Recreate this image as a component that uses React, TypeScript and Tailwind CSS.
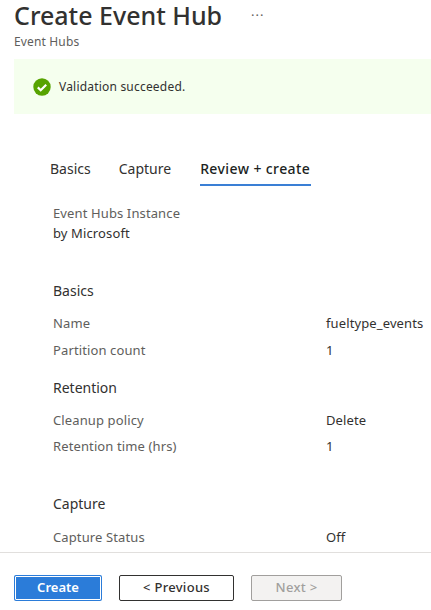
const font = "font-['Noto_Sans','Open_Sans',sans-serif]"

function Row({ label, value, className = '' }: { label: string; value: string; className?: string }) {
  return (
    <div className={`flex h-5 items-center text-[13px] leading-5 tracking-[0.12px] ${className}`}>
      <span className="w-[273px] text-[#605e5c]">{label}</span>
      <span className="text-[#323130]">{value}</span>
    </div>
  )
}

function Heading({ children, className = '' }: { children: string; className?: string }) {
  return <div className={`h-5 text-[14px] leading-5 text-[#323130] ${className}`}>{children}</div>
}

export default function App() {
  return (
    <div className={`flex h-[610px] w-[431px] flex-col overflow-hidden bg-white ${font}`}>
      <div className="flex-1">
        <div className="pl-[14px]">
          <div className="flex items-center">
            <h1 className="text-[25px] font-medium leading-[30px] text-[#323130]">Create Event Hub</h1>
            <span className="ml-[29px] text-[13px] leading-[30px] tracking-[1px] text-[#605e5c]">···</span>
          </div>
          <div className="mt-[4px] text-[12px] leading-4 tracking-[0.15px] text-[#605e5c]">Event Hubs</div>
        </div>

        <div className="ml-[14px] mt-[9px] flex h-[55px] items-center bg-[#f5ffee] pl-[19px]">
          <svg width="18" height="18" viewBox="0 0 18 18" className="shrink-0">
            <circle cx="9" cy="9" r="8.7" fill="#57a300" />
            <path d="M4.8 9.4l2.9 2.9 5.5-5.6" fill="none" stroke="#fff" strokeWidth="2.2" />
          </svg>
          <span className="ml-2 text-[12px] leading-4 tracking-[0.2px] text-[#323130]">Validation succeeded.</span>
        </div>

        <div className="mt-[45px] flex pl-[50px] text-[14px]">
          <div className="h-[27px] leading-5 text-[#323130]">Basics</div>
          <div className="ml-[28px] h-[27px] leading-5 text-[#323130]">Capture</div>
          <div className="ml-[29px] h-[27px] w-[111px] whitespace-nowrap border-b-[2px] border-[#3a7fd5] font-medium leading-5 tracking-[0.4px] text-[#201f1e]">
            Review + create
          </div>
        </div>

        <div className="pl-[53px]">
          <div className="mt-[17px] h-5 text-[13px] leading-5 tracking-[0.12px] text-[#605e5c]">Event Hubs Instance</div>
          <div className="h-5 text-[13px] leading-5 tracking-[0.12px] text-[#323130]">by Microsoft</div>

          <Heading className="mt-[38px]">Basics</Heading>
          <Row className="mt-[12px]" label="Name" value="fueltype_events" />
          <Row className="mt-[7px]" label="Partition count" value="1" />

          <Heading className="mt-[18px]">Retention</Heading>
          <Row className="mt-[12px]" label="Cleanup policy" value="Delete" />
          <Row className="mt-[6px]" label="Retention time (hrs)" value="1" />

          <Heading className="mt-[38px]">Capture</Heading>
          <Row className="mt-[13px]" label="Capture Status" value="Off" />
        </div>
      </div>

      <div className="flex h-[58px] shrink-0 items-start gap-[17px] border-t border-[#e1dfdd] pl-[14px] pt-[22px]">
        <button className="flex h-[26px] w-[88px] items-center justify-center rounded-[2px] bg-[#2b7cd9] text-[13px] font-semibold text-white outline outline-1 -outline-offset-2 outline-white">
          Create
        </button>
        <button className="h-[26px] w-[115px] rounded-[2px] border border-[#323130] bg-white text-[13px] font-medium tracking-[0.3px] text-[#323130]">
          &lt; Previous
        </button>
        <button className="h-[26px] w-[91px] rounded-[2px] border border-[#a19f9d] bg-[#f3f2f1] text-[13px] font-medium tracking-[0.3px] text-[#a19f9d]">
          Next &gt;
        </button>
      </div>
    </div>
  )
}
